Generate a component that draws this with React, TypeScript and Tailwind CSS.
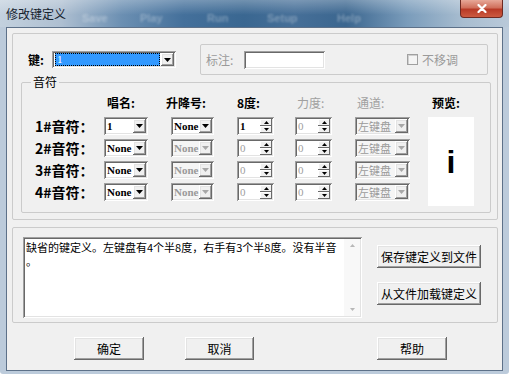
import React from 'react';

const sunken =
  'shadow-[inset_1px_1px_0_#a0a0a0,inset_-1px_-1px_0_#ffffff,inset_2px_2px_0_#696969,inset_-2px_-2px_0_#e3e3e3]';
const raised =
  'shadow-[inset_-1px_-1px_0_#696969,inset_1px_1px_0_#ffffff,inset_-2px_-2px_0_#a0a0a0,inset_2px_2px_0_#e3e3e3]';
const raisedThin = 'shadow-[inset_-1px_-1px_0_#696969,inset_1px_1px_0_#ffffff]';

const Tri = ({ up = false, color = '#000', w = 7, h = 4 }: { up?: boolean; color?: string; w?: number; h?: number }) => (
  <svg width={w} height={h} viewBox={`0 0 ${w} ${h}`}>
    <polygon points={up ? `${w / 2},0 ${w},${h} 0,${h}` : `0,0 ${w},0 ${w / 2},${h}`} fill={color} />
  </svg>
);

const Combo = ({ w, text, disabled = false, cjk = false }: { w: string; text: string; disabled?: boolean; cjk?: boolean }) => (
  <div className={`${w} h-[18px] flex items-center p-[2px] ${sunken} ${disabled ? 'bg-[#f5f5f5] text-[#9a9a9a]' : 'bg-white text-black'}`}>
    <span
      className={`flex-1 pl-[1px] leading-[14px] whitespace-nowrap ${
        cjk ? 'text-[11px]' : "font-['Liberation_Serif',serif] text-[11px] font-bold"
      }`}
    >
      {text}
    </span>
    <span className={`w-[13px] h-full flex items-center justify-center bg-[#f0f0f0] ${raised}`}>
      <Tri color={disabled ? '#a8a8a8' : '#000'} />
    </span>
  </div>
);

const Spin = ({ text, disabled = false }: { text: string; disabled?: boolean }) => (
  <div className={`w-[37px] h-[18px] flex items-center p-[2px] bg-white ${sunken}`}>
    <span className={`flex-1 pl-[1px] leading-none font-['Liberation_Serif',serif] text-[11px] ${disabled ? 'text-[#a0a0a0]' : 'text-black font-bold'}`}>
      {text}
    </span>
    <span className="w-[12px] h-full flex flex-col">
      <span className={`flex-1 flex items-center justify-center bg-[#f0f0f0] ${raisedThin}`}>
        <Tri up w={5} h={3} />
      </span>
      <span className={`flex-1 flex items-center justify-center bg-[#f0f0f0] ${raisedThin}`}>
        <Tri w={5} h={3} />
      </span>
    </span>
  </div>
);

const Btn = ({ w, label }: { w: string; label: string }) => (
  <div className={`${w} h-[23px] flex items-center justify-center bg-[#f0f0f0] ${raised} text-[12px]`}>{label}</div>
);

const rows = [
  { n: '1', name: '1', acc: 'None', oct: '1', first: true },
  { n: '2', name: 'None', acc: 'None', oct: '0', first: false },
  { n: '3', name: 'None', acc: 'None', oct: '0', first: false },
  { n: '4', name: 'None', acc: 'None', oct: '0', first: false },
];

const TitleBar = () => (
  <div className="h-[27px] flex items-start bg-[linear-gradient(180deg,rgba(255,255,255,0.28),rgba(255,255,255,0)_55%),linear-gradient(90deg,#c3d1de_0%,#aebfd1_12%,#6b8fb2_24%,#44709b_36%,#3a6791_48%,#466f98_58%,#3b668f_68%,#7a9cbb_80%,#a8bdd0_91%,#b9c9d9_100%)]">
    <span className="pl-[6px] pt-[6px] leading-[16px] text-[12px] text-[#16222e]">修改键定义</span>
    <div className="ml-[16px] pt-[10px] flex text-[11px] font-bold text-white/30 blur-[1px] font-['Liberation_Sans',sans-serif]">
      <span className="w-[58px]">Save</span>
      <span className="w-[67px]">Play</span>
      <span className="w-[60px]">Run</span>
      <span className="w-[70px]">Setup</span>
      <span>Help</span>
    </div>
    <div className="ml-auto mr-[6px] w-[43px] h-[18px] rounded-b-[4px] border border-t-0 border-[#6e2a22] bg-[linear-gradient(180deg,#e7a898,#d0705c_45%,#b83a26_55%,#cc5a40)] flex items-center justify-center">
      <svg width="10" height="9" viewBox="0 0 10 9">
        <path d="M1.5 1 L8.5 8 M8.5 1 L1.5 8" stroke="#fff" strokeWidth="2.2" strokeLinecap="round" />
      </svg>
    </div>
  </div>
);

export default function App() {
  return (
    <div className="w-[509px] h-[378px] bg-white overflow-hidden font-['Noto_Sans_CJK_SC',sans-serif] text-[12px] text-black">
      <div className="w-[509px] h-[374px] flex flex-col bg-[#bccbdb] rounded-b-[3px]">
        <TitleBar />
        <div className="mx-[6px] mb-[3px] flex-1 border border-[#5d7189] bg-[#f0f0f0] pl-[5px] pr-[4px] pt-[5px] flex flex-col">
          {/* key + notes group */}
          <div className="h-[187px] border border-[#cbcbcb] rounded-[2px] flex flex-col">
            <div className="mt-[10px] h-[31px] flex items-center">
              <span className="ml-[15px] w-[24px] font-bold leading-none">键:</span>
              <div className={`w-[124px] h-[17px] flex items-center p-[2px] bg-white ${sunken}`}>
                <span className="flex-1 h-full ml-[1px] mr-[1px] bg-[#3399ff] outline-1 outline-dotted outline-[#000] -outline-offset-1 text-white font-['Liberation_Serif',serif] text-[11px] leading-[13px] pl-[2px]">
                  1
                </span>
                <span className={`w-[13px] h-full flex items-center justify-center bg-[#f0f0f0] ${raised}`}>
                  <Tri />
                </span>
              </div>
              <div className="ml-[24px] w-[288px] h-[31px] border border-[#cbcbcb] rounded-[2px] flex items-center text-[#9a9a9a]">
                <span className="w-[43px] pl-[5px] leading-none">标注:</span>
                <div className={`w-[81px] h-[18px] bg-white ${sunken}`} />
                <span className="ml-[82px] w-[11px] h-[11px] border border-[#a0a0a0] bg-[#f4f4f4] shadow-[inset_1px_1px_0_#d0d0d0]" />
                <span className="ml-[4px] leading-none">不移调</span>
              </div>
            </div>

            <div className="relative ml-[8px] mt-[7px] w-[470px] h-[131px] border border-[#cbcbcb] rounded-[2px] flex flex-col">
              <span className="absolute -top-[9px] left-[9px] px-[2px] bg-[#f0f0f0] leading-[16px]">音符</span>
              <div className="mt-[12px] h-[16px] pl-[85px] flex items-center font-bold">
                <span className="w-[59px]">唱名:</span>
                <span className="w-[71px]">升降号:</span>
                <span className="w-[60px]">8度:</span>
                <span className="w-[60px] font-normal text-[#a0a0a0]">力度:</span>
                <span className="w-[75px] font-normal text-[#a0a0a0]">通道:</span>
                <span>预览:</span>
              </div>
              <div className="mt-[6px] flex items-start">
                <div className="pl-[13px] flex flex-col gap-[4px]">
                  {rows.map((r) => (
                    <div key={r.n} className="h-[18px] flex items-center">
                      <span className="w-[69px] text-[14px] font-bold leading-none whitespace-nowrap">{r.n}#音符：</span>
                      <Combo w="w-[44px]" text={r.name} />
                      <span className="ml-[23px]">
                        <Combo w="w-[43px]" text={r.acc} disabled={!r.first} />
                      </span>
                      <span className="ml-[23px]">
                        <Spin text={r.oct} disabled={!r.first} />
                      </span>
                      <span className="ml-[21px]">
                        <Spin text="0" disabled />
                      </span>
                      <span className="ml-[23px]">
                        <Combo w="w-[55px]" text="左键盘" disabled cjk />
                      </span>
                    </div>
                  ))}
                </div>
                <div className="ml-[18px] w-[46px] h-[89px] bg-white flex items-center justify-center font-['Liberation_Sans',sans-serif] font-bold text-[32px] leading-none">
                  i
                </div>
              </div>
            </div>
          </div>

          {/* description group */}
          <div className="mt-[7px] h-[96px] border border-[#cbcbcb] rounded-[2px] flex items-start">
            <div className={`ml-[10px] mt-[9px] w-[339px] h-[81px] bg-white p-[2px] flex ${sunken}`}>
              <div className="flex-1 pl-[1px] pt-[1px] text-[11px] leading-[14px] overflow-hidden">
                <div className="whitespace-nowrap">缺省的键定义。左键盘有4个半8度，右手有3个半8度。没有半音</div>
                <div>。</div>
              </div>
              <div className="w-[16px] bg-[#f8f8f8] flex flex-col items-center justify-between py-[5px]">
                <Tri up color="#b8b8b8" w={5} h={3} />
                <Tri color="#b8b8b8" w={5} h={3} />
              </div>
            </div>
            <div className="ml-[15px] mt-[17px] flex flex-col gap-[14px]">
              <Btn w="w-[104px]" label="保存键定义到文件" />
              <Btn w="w-[104px]" label="从文件加载键定义" />
            </div>
          </div>

          {/* dialog buttons */}
          <div className="mt-[14px] flex items-center">
            <span className="ml-[62px]">
              <Btn w="w-[70px]" label="确定" />
            </span>
            <span className="ml-[41px]">
              <Btn w="w-[69px]" label="取消" />
            </span>
            <span className="ml-[123px]">
              <Btn w="w-[70px]" label="帮助" />
            </span>
          </div>
        </div>
      </div>
    </div>
  );
}
